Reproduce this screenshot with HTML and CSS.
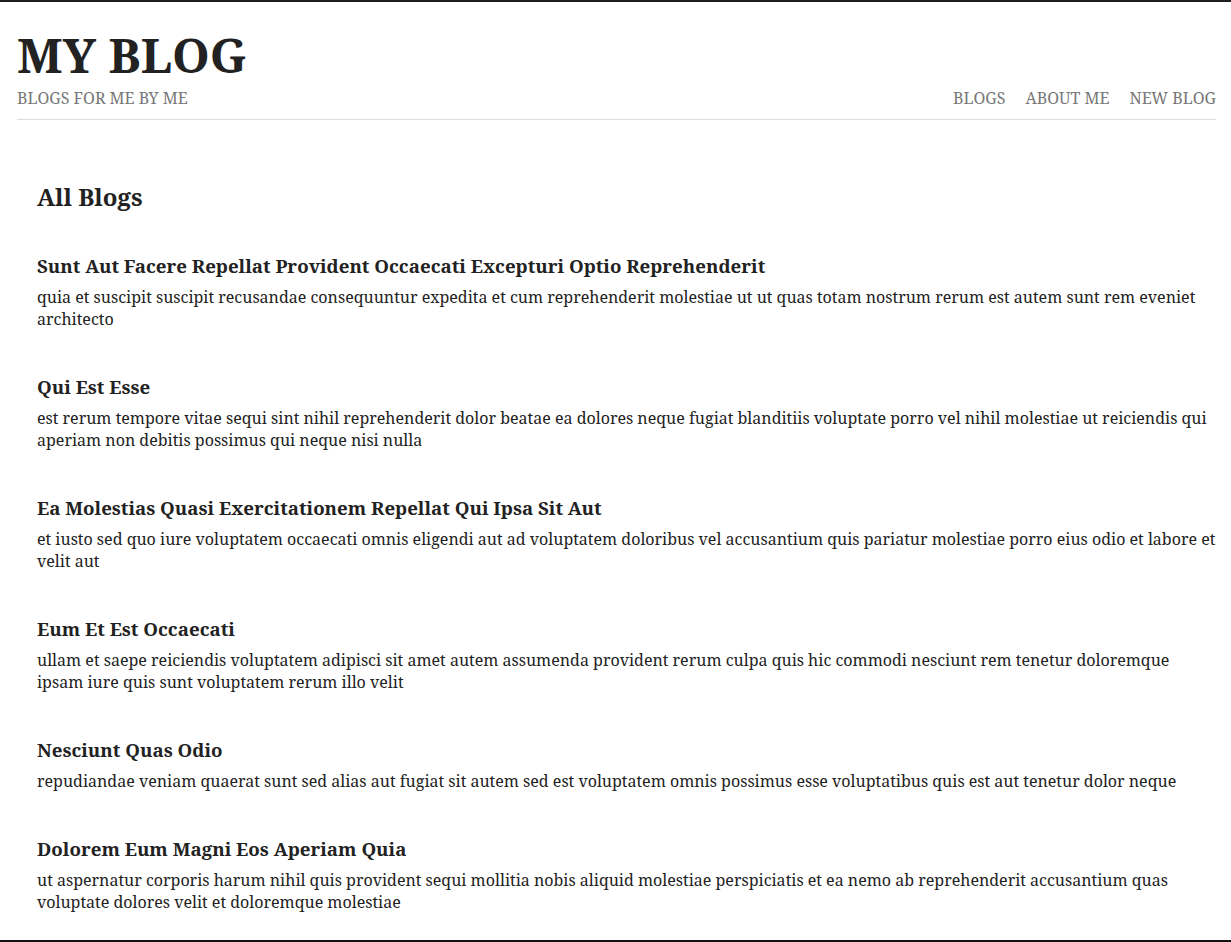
FILE: index.html
```html
<!DOCTYPE html>
<html lang="en">
<head>
<meta charset="utf-8">
<title>My Blog</title>
<link rel="stylesheet" href="styles.css">
</head>
<body>
<div class="page">
  <header class="site-header">
    <div class="brand">
      <h1 class="site-title">MY BLOG</h1>
      <p class="tagline">BLOGS FOR ME BY ME</p>
    </div>
    <nav class="nav">
      <a href="#">BLOGS</a>
      <a href="#">ABOUT ME</a>
      <a href="#">NEW BLOG</a>
    </nav>
  </header>
  <main class="content">
    <h2 class="section-title">All Blogs</h2>
    <article class="post">
      <h3 class="post-title">Sunt Aut Facere Repellat Provident Occaecati Excepturi Optio Reprehenderit</h3>
      <p class="post-body">quia et suscipit suscipit recusandae consequuntur expedita et cum reprehenderit molestiae ut ut quas totam nostrum rerum est autem sunt rem eveniet architecto</p>
    </article>
    <article class="post">
      <h3 class="post-title">Qui Est Esse</h3>
      <p class="post-body">est rerum tempore vitae sequi sint nihil reprehenderit dolor beatae ea dolores neque fugiat blanditiis voluptate porro vel nihil molestiae ut reiciendis qui aperiam non debitis possimus qui neque nisi nulla</p>
    </article>
    <article class="post">
      <h3 class="post-title">Ea Molestias Quasi Exercitationem Repellat Qui Ipsa Sit Aut</h3>
      <p class="post-body">et iusto sed quo iure voluptatem occaecati omnis eligendi aut ad voluptatem doloribus vel accusantium quis pariatur molestiae porro eius odio et labore et velit aut</p>
    </article>
    <article class="post">
      <h3 class="post-title">Eum Et Est Occaecati</h3>
      <p class="post-body">ullam et saepe reiciendis voluptatem adipisci sit amet autem assumenda provident rerum culpa quis hic commodi nesciunt rem tenetur doloremque ipsam iure quis sunt voluptatem rerum illo velit</p>
    </article>
    <article class="post">
      <h3 class="post-title">Nesciunt Quas Odio</h3>
      <p class="post-body">repudiandae veniam quaerat sunt sed alias aut fugiat sit autem sed est voluptatem omnis possimus esse voluptatibus quis est aut tenetur dolor neque</p>
    </article>
    <article class="post">
      <h3 class="post-title">Dolorem Eum Magni Eos Aperiam Quia</h3>
      <p class="post-body">ut aspernatur corporis harum nihil quis provident sequi mollitia nobis aliquid molestiae perspiciatis et ea nemo ab reprehenderit accusantium quas voluptate dolores velit et doloremque molestiae</p>
    </article>
  </main>
</div>
</body>
</html>
```
FILE: styles.css
```css
* { box-sizing: border-box; }
html, body { margin: 0; padding: 0; }
body {
  font-family: "Noto Serif", "DejaVu Serif", serif;
  color: #222;
  background: #fff;
}
.page {
  min-height: 942px;
  border-top: 2px solid #1e1e1e;
  border-bottom: 2px solid #111;
  padding: 0 15px 0 17px;
}
.site-header {
  display: flex;
  justify-content: space-between;
  align-items: flex-end;
  border-bottom: 1px solid #ddd;
  padding-top: 24px;
  padding-bottom: 10px;
}
.site-title {
  margin: 0;
  font-size: 48px;
  font-weight: 700;
  line-height: 1.2;
  color: #222;
}
.tagline {
  margin: 3px 0 0;
  font-size: 16px;
  line-height: 22px;
  color: #777;
}
.nav {
  display: flex;
  gap: 20px;
}
.nav a {
  color: #777;
  text-decoration: none;
  font-size: 16px;
  line-height: 22px;
}
.content {
  padding: 40px 0 16px 20px;
}
.section-title {
  margin: 21px 0 40px;
  font-size: 24px;
  line-height: 32px;
  font-weight: 700;
}
.post {
  margin-bottom: 44px;
}
.post:last-child {
  margin-bottom: 0;
}
.post-title {
  margin: 0 0 7px;
  font-size: 18.72px;
  line-height: 26px;
  font-weight: 700;
}
.post-body {
  margin: 0;
  font-size: 16px;
  line-height: 22px;
}
```
